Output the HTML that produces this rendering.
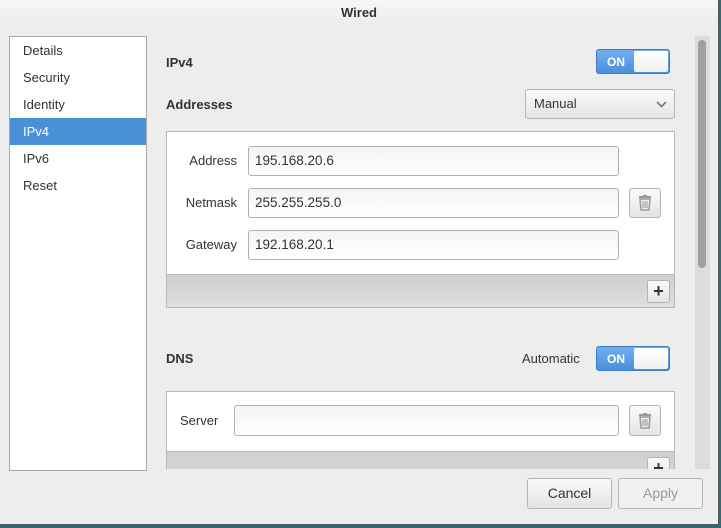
<!DOCTYPE html>
<html><head><style>
body{margin:0;width:721px;height:528px;background:#2c6b78;overflow:hidden;font-family:"Liberation Sans",sans-serif;font-size:13px;color:#2e3436;position:relative}
.win{position:absolute;left:0;top:0;width:718px;height:524px;background:#ededed;border-right:1px solid #555;border-bottom:1px solid #555}
.hdr{position:absolute;left:0;top:0;width:718px;height:28px;background:linear-gradient(#f6f6f6,#ececec);text-align:center;line-height:26px;font-weight:bold;color:#333}
.a{position:absolute}
.side{left:9px;top:36px;width:136px;height:433px;background:#fff;border:1px solid #a8a8a8}
.side div{height:27px;line-height:27px;padding-left:13px}
.side .sel{background:#4a90d9;color:#fff}
.b{font-weight:bold}
.tog{width:74px;height:25px;border:1px solid #3d7cc4;border-radius:3px;background:linear-gradient(#72aef0,#4a8fdc);box-sizing:border-box}
.tog span{position:absolute;left:10px;top:5px;color:#fff;font-weight:bold;font-size:12px}
.tog i{position:absolute;left:37px;top:1px;width:34px;height:21px;background:linear-gradient(#fff,#f0f0f0);border-radius:2px}
.frame{background:#fff;border:1px solid #b8b8b8;box-sizing:border-box}
.tb{background:linear-gradient(#cfcfcf,#dedede);border-top:1px solid #bbb}
.ent{background:linear-gradient(#f4f4f4,#fff);border:1px solid #b0b0b0;border-radius:3px;box-sizing:border-box;padding-left:6px;line-height:27px;font-size:13.5px}
.btn{border:1px solid #b4b4b4;border-radius:3px;background:linear-gradient(#fafafa,#e4e4e4);box-sizing:border-box;text-align:center}
.lbl{text-align:right;width:70px}
</style></head><body>
<div class="win">
<div class="hdr">Wired</div>
<div class="a side"><div>Details</div><div>Security</div><div>Identity</div><div class="sel">IPv4</div><div>IPv6</div><div>Reset</div></div>
<div class="a" style="left:150px;top:30px;width:540px;height:439px;overflow:hidden">
 <div class="a b" style="left:16px;top:25px">IPv4</div>
 <div class="a tog" style="left:446px;top:19px"><span>ON</span><i></i></div>
 <div class="a b" style="left:16px;top:67px">Addresses</div>
 <div class="a btn" style="left:375px;top:59px;width:150px;height:30px;text-align:left;padding-left:8px;line-height:28px">Manual<svg class="a" style="right:7px;top:11px" width="11" height="7" viewBox="0 0 11 7"><path d="M1 1l4.5 4.5L10 1" fill="none" stroke="#666" stroke-width="1.5"/></svg></div>
 <div class="a frame" style="left:16px;top:101px;width:509px;height:177px">
  <div class="a lbl" style="left:0;top:21px">Address</div>
  <div class="a ent" style="left:81px;top:14px;width:371px;height:30px">195.168.20.6</div>
  <div class="a lbl" style="left:0;top:63px">Netmask</div>
  <div class="a ent" style="left:81px;top:56px;width:371px;height:30px">255.255.255.0</div>
  <div class="a lbl" style="left:0;top:105px">Gateway</div>
  <div class="a ent" style="left:81px;top:98px;width:371px;height:30px">192.168.20.1</div>
  <div class="a btn" style="left:462px;top:56px;width:32px;height:30px"><svg width="14" height="16" style="margin-top:6px" viewBox="0 0 14 16"><rect x="1" y="1" width="12" height="2" fill="#999"/><rect x="5" y="0" width="4" height="2" fill="#999"/><path d="M2 4h10l-1 11H3z" fill="none" stroke="#999" stroke-width="1.5"/><path d="M5 6v7M7 6v7M9 6v7" stroke="#999"/></svg></div>
  <div class="a tb" style="left:0;top:142px;width:507px;height:32px"><div class="a btn" style="left:480px;top:5px;width:23px;height:23px;font-size:18px;line-height:20px;font-weight:bold">+</div></div>
 </div>
 <div class="a b" style="left:16px;top:321px">DNS</div>
 <div class="a" style="left:372px;top:321px">Automatic</div>
 <div class="a tog" style="left:446px;top:316px"><span>ON</span><i></i></div>
 <div class="a frame" style="left:16px;top:361px;width:509px;height:120px">
  <div class="a" style="left:13px;top:21px">Server</div>
  <div class="a ent" style="left:67px;top:13px;width:385px;height:31px"></div>
  <div class="a btn" style="left:462px;top:13px;width:32px;height:31px"><svg width="14" height="16" style="margin-top:7px" viewBox="0 0 14 16"><rect x="1" y="1" width="12" height="2" fill="#999"/><rect x="5" y="0" width="4" height="2" fill="#999"/><path d="M2 4h10l-1 11H3z" fill="none" stroke="#999" stroke-width="1.5"/><path d="M5 6v7M7 6v7M9 6v7" stroke="#999"/></svg></div>
  <div class="a tb" style="left:0;top:59px;width:507px;height:40px"><div class="a btn" style="left:480px;top:5px;width:23px;height:23px;font-size:18px;line-height:20px;font-weight:bold">+</div></div>
 </div>
</div>
<div class="a" style="left:695px;top:36px;width:15px;height:433px;background:#dcdcdc"></div>
<div class="a" style="left:698px;top:40px;width:8px;height:228px;background:#a0a0a0;border-radius:4px"></div>
<div class="a btn" style="left:527px;top:478px;width:85px;height:31px;line-height:29px;font-size:14px">Cancel</div>
<div class="a btn" style="left:618px;top:478px;width:85px;height:31px;line-height:29px;font-size:14px;color:#999;background:#f0f0f0">Apply</div>
</div>
</body></html>
